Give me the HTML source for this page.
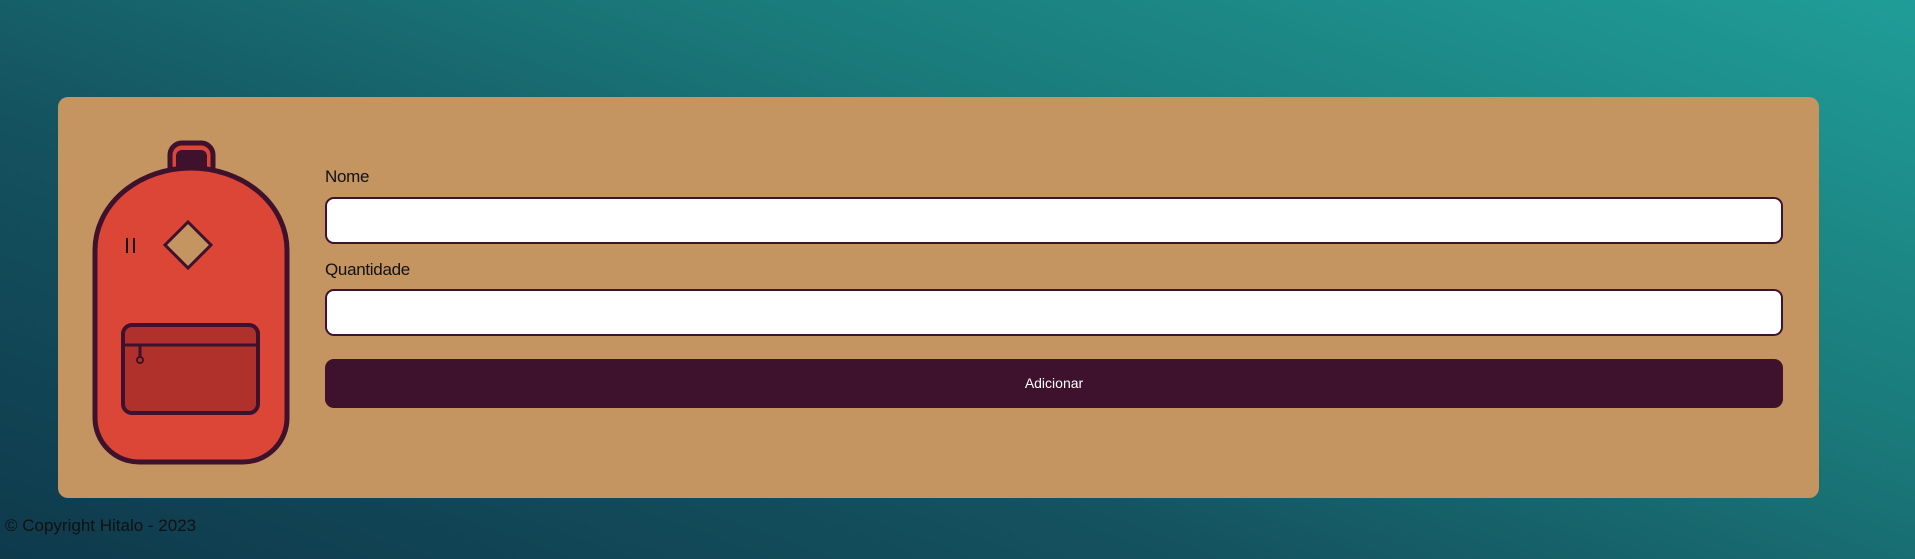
<!DOCTYPE html>
<html><head><meta charset="utf-8"><style>
html,body{margin:0;padding:0;width:1915px;height:559px;overflow:hidden}
body{background:
linear-gradient(200deg,#209d98 0%,#1a7a7a 35%,#14525f 65%,#0e3a4c 100%);font-family:"Liberation Sans",sans-serif;position:relative}
.card{position:absolute;left:58px;top:97px;width:1761px;height:401px;background:#c49561;border-radius:10px}
label{position:absolute;left:325px;font-size:17px;color:#111;letter-spacing:-0.3px}
.inp{position:absolute;left:325px;width:1454px;height:43px;background:#fff;border:2px solid #3e1230;border-radius:9px}
.btn{position:absolute;left:325px;top:359px;width:1458px;height:49px;background:#3e112c;border-radius:9px;color:#fff;font-size:14px;text-align:center;line-height:49px}
.foot{position:absolute;left:5px;top:516px;font-size:17px;color:#111}
</style></head><body>
<div class="card"></div>
<svg style="position:absolute;left:0;top:0" width="400" height="500">
<rect x="170" y="143" width="43" height="36" rx="12" fill="#db4637" stroke="#3e112c" stroke-width="5"/>
<rect x="176" y="150" width="31" height="28" rx="6" fill="#3e112c"/>
<path d="M95 250 A96 82 0 0 1 287 250 L287 418 A44 44 0 0 1 243 462 L139 462 A44 44 0 0 1 95 418 Z" fill="#db4637" stroke="#3e112c" stroke-width="5"/>
<rect x="123" y="325" width="135" height="88" rx="9" fill="#b0312c" stroke="#3e112c" stroke-width="4"/>
<line x1="124" y1="345" x2="257" y2="345" stroke="#3e112c" stroke-width="3"/>
<line x1="140" y1="346" x2="140" y2="357" stroke="#3e112c" stroke-width="3"/>
<circle cx="140" cy="360" r="3" fill="none" stroke="#3e112c" stroke-width="2"/>
<path d="M188 222 L211 245 L188 268 L165 245 Z" fill="#c49561" stroke="#3e112c" stroke-width="3"/>
<line x1="127" y1="238" x2="127" y2="253" stroke="#111" stroke-width="2"/>
<line x1="134" y1="238" x2="134" y2="253" stroke="#111" stroke-width="2"/>
</svg>
<label style="top:167px">Nome</label>
<div class="inp" style="top:197px"></div>
<label style="top:260px">Quantidade</label>
<div class="inp" style="top:289px"></div>
<div class="btn">Adicionar</div>
<div class="foot">© Copyright Hitalo - 2023</div>
</body></html>
